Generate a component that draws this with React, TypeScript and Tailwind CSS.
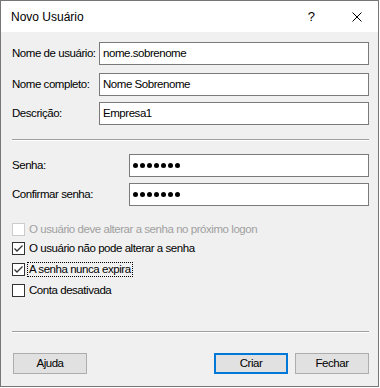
import React from "react";

const font = { fontFamily: '"Liberation Sans", Arial, sans-serif' };

function TextField({ width, value }: { width: string; value: string }) {
  return (
    <div className={`${width} h-[23px] bg-white border border-[#7a7a7a] flex items-center pl-[3px] text-[11.5px] tracking-[-0.45px] text-black`}>
      {value}
    </div>
  );
}

function PasswordField() {
  return (
    <div className="w-[240px] h-[23px] bg-white border border-[#7a7a7a] flex items-center pl-[3px] gap-[2px]">
      {[0, 1, 2, 3, 4, 5, 6].map((i) => (
        <span key={i} className="w-[5px] h-[5px] rounded-full bg-black" />
      ))}
    </div>
  );
}

function CheckRow({
  label,
  checked,
  disabled,
  focused,
  className,
}: {
  label: string;
  checked?: boolean;
  disabled?: boolean;
  focused?: boolean;
  className: string;
}) {
  return (
    <div className={`flex items-center h-[13px] ${className}`}>
      <div
        className={`w-[13px] h-[13px] bg-white border ${disabled ? "border-[#cccccc]" : "border-[#333333]"} flex items-center justify-center`}
      >
        {checked && (
          <svg width="11" height="11" viewBox="0 0 11 11">
            <polyline points="1.5,5.5 4,8 9.5,2.5" fill="none" stroke="#333333" strokeWidth="1.3" />
          </svg>
        )}
      </div>
      <span
        className={`ml-[3px] px-[1px] text-[11.5px] leading-[13px] tracking-[-0.45px] ${disabled ? "text-[#a0a0a0]" : "text-black"} ${focused ? "outline outline-1 outline-dotted outline-black" : ""}`}
      >
        {label}
      </span>
    </div>
  );
}

function Separator({ className }: { className: string }) {
  return <div className={`w-[357px] h-[2px] border-t border-[#a0a0a0] border-b border-b-white ${className}`} />;
}

export default function App() {
  return (
    <div className="w-[380px] h-[388px] bg-white" style={font}>
      <div className="w-[379px] h-[387px] border border-[#767676] flex flex-col">
        {/* barra de título */}
        <div className="h-[31px] bg-white flex items-center">
          <span className="ml-[10px] text-[12px] text-black">Novo Usuário</span>
          <span className="ml-auto text-[13px] text-black mr-[37px]">?</span>
          <svg width="10" height="10" viewBox="0 0 10 10" className="mr-[16px]">
            <path d="M0.5 0.5 L9.5 9.5 M9.5 0.5 L0.5 9.5" stroke="#000" strokeWidth="1" />
          </svg>
        </div>

        {/* corpo */}
        <div className="flex-1 bg-[#f0f0f0] flex flex-col pl-[11px] pt-[10px] text-[11.5px] text-black">
          <div className="flex items-center">
            <span className="w-[87px] tracking-[-0.45px]">Nome de usuário:</span>
            <TextField width="w-[270px]" value="nome.sobrenome" />
          </div>
          <div className="flex items-center mt-[8px]">
            <span className="w-[87px] tracking-[-0.45px]">Nome completo:</span>
            <TextField width="w-[270px]" value="Nome Sobrenome" />
          </div>
          <div className="flex items-center mt-[6px]">
            <span className="w-[87px] tracking-[-0.45px]">Descrição:</span>
            <TextField width="w-[270px]" value="Empresa1" />
          </div>

          <Separator className="mt-[14px]" />

          <div className="flex items-center mt-[13px]">
            <span className="w-[117px] tracking-[-0.45px]">Senha:</span>
            <PasswordField />
          </div>
          <div className="flex items-center mt-[6px]">
            <span className="w-[117px] tracking-[-0.45px]">Confirmar senha:</span>
            <PasswordField />
          </div>

          <CheckRow className="mt-[17px]" label="O usuário deve alterar a senha no próximo logon" disabled />
          <CheckRow className="mt-[6px]" label="O usuário não pode alterar a senha" checked />
          <CheckRow className="mt-[8px]" label="A senha nunca expira" checked focused />
          <CheckRow className="mt-[8px]" label="Conta desativada" />

          <Separator className="mt-[34px]" />

          <div className="flex items-center mt-[20px]">
            <button className="ml-[1px] w-[74px] h-[21px] bg-[#e1e1e1] border border-[#adadad] text-[11.5px] tracking-[-0.45px]">
              Ajuda
            </button>
            <button className="ml-[127px] w-[74px] h-[21px] bg-[#e1e1e1] border-2 border-[#0078d7] text-[11.5px] tracking-[-0.45px]">
              Criar
            </button>
            <button className="ml-[7px] w-[74px] h-[21px] bg-[#e1e1e1] border border-[#adadad] text-[11.5px] tracking-[-0.45px]">
              Fechar
            </button>
          </div>
        </div>
      </div>
    </div>
  );
}
